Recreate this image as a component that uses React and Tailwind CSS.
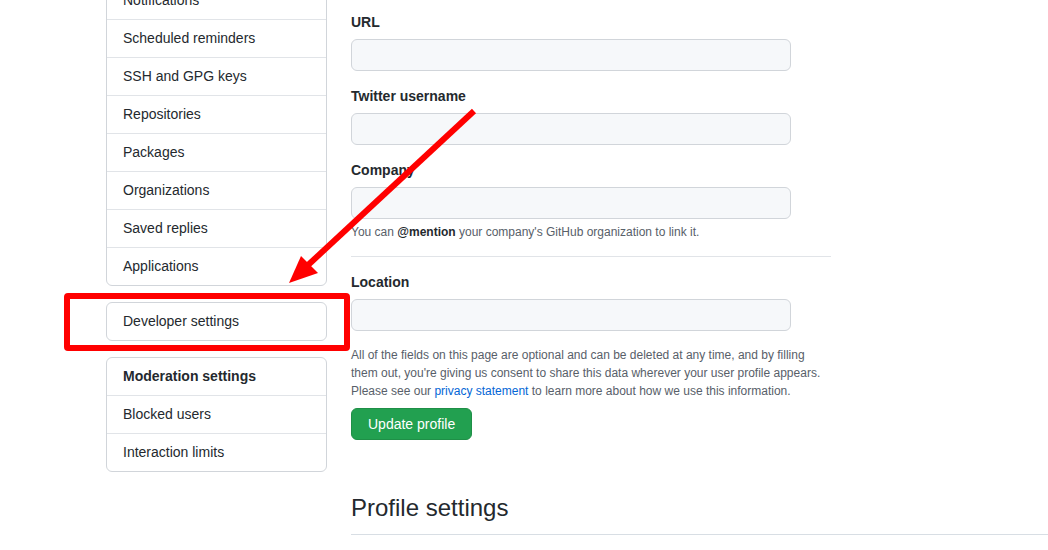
import React from "react";

const topItems = [
  "Notifications",
  "Scheduled reminders",
  "SSH and GPG keys",
  "Repositories",
  "Packages",
  "Organizations",
  "Saved replies",
  "Applications",
];

const moderationItems = ["Blocked users", "Interaction limits"];

function MenuRow({ label, bold, first }) {
  return (
    <div
      className={`flex items-center px-4 text-[14px] text-[#24292e] ${
        bold ? "font-bold" : ""
      } ${first ? "h-[37px]" : "h-[38px] border-t border-[#e1e4e8]"}`}
    >
      {label}
    </div>
  );
}

function Field({ label }) {
  return (
    <div className="mb-[15px]">
      <label className="block text-[14px] leading-[20px] font-bold text-[#24292e] mb-[7px]">
        {label}
      </label>
      <input
        type="text"
        className="block w-[440px] h-[32px] rounded-[6px] border border-[#d1d5da] bg-[#f6f8fa] outline-none"
      />
    </div>
  );
}

export default function App() {
  return (
    <div
      className="relative w-[1048px] h-[550px] overflow-hidden bg-white"
      style={{ fontFamily: '"Liberation Sans", Arial, sans-serif' }}
    >
      <div className="flex pl-[106px] gap-[24px]">
        {/* sidebar */}
        <div className="w-[221px] shrink-0 mt-[-19px] flex flex-col gap-[16px]">
          <div className="border border-[#d1d5da] rounded-[6px] bg-white">
            {topItems.map((item, i) => (
              <MenuRow key={item} label={item} first={i === 0} />
            ))}
          </div>
          <div className="border border-[#d1d5da] rounded-[6px] bg-white">
            <MenuRow label="Developer settings" first />
          </div>
          <div className="border border-[#d1d5da] rounded-[6px] bg-white">
            <MenuRow label="Moderation settings" bold first />
            {moderationItems.map((item) => (
              <MenuRow key={item} label={item} />
            ))}
          </div>
        </div>

        {/* main form */}
        <div className="flex-1 pt-[12px]">
          <div className="w-[480px]">
            <Field label="URL" />
            <Field label="Twitter username" />
            <div className="mb-[15px]">
              <label className="block text-[14px] leading-[20px] font-bold text-[#24292e] mb-[7px]">
                Company
              </label>
              <input
                type="text"
                className="block w-[440px] h-[32px] rounded-[6px] border border-[#d1d5da] bg-[#f6f8fa] outline-none"
              />
              <p className="mt-[4px] text-[12px] leading-[18px] text-[#586069]">
                You can <span className="font-bold text-[#24292e]">@mention</span> your company's GitHub organization to link it.
              </p>
            </div>
            <div className="border-t border-[#e1e4e8] mb-[15px]" />
            <Field label="Location" />
            <p className="text-[12px] leading-[18px] text-[#586069] w-[478px]">
              All of the fields on this page are optional and can be deleted at any time, and by filling them out, you're giving us consent to share this data wherever your user profile appears. Please see our{" "}
              <a className="text-[#0366d6]">privacy statement</a> to learn more about how we use this information.
            </p>
            <button className="mt-[8px] h-[32px] px-4 rounded-[6px] bg-[#22a050] border border-[#1f8f47] text-white text-[14px]">
              Update profile
            </button>
          </div>
          <h2 className="mt-[50px] pb-[8px] border-b border-[#d8dee4] text-[24px] leading-[36px] font-normal text-[#24292e]">
            Profile settings
          </h2>
        </div>
      </div>

      {/* annotation overlay */}
      <div className="absolute left-[64px] top-[293px] w-[286px] h-[58px] border-[6px] border-[#ff0000] rounded-[4px] pointer-events-none" />
      <svg
        className="absolute left-0 top-0 pointer-events-none"
        width="1048"
        height="550"
        viewBox="0 0 1048 550"
      >
        <line x1="474" y1="111" x2="307" y2="266" stroke="#ff0000" strokeWidth="6" />
        <polygon points="289,283 301,256 318,273" fill="#ff0000" />
      </svg>
    </div>
  );
}
